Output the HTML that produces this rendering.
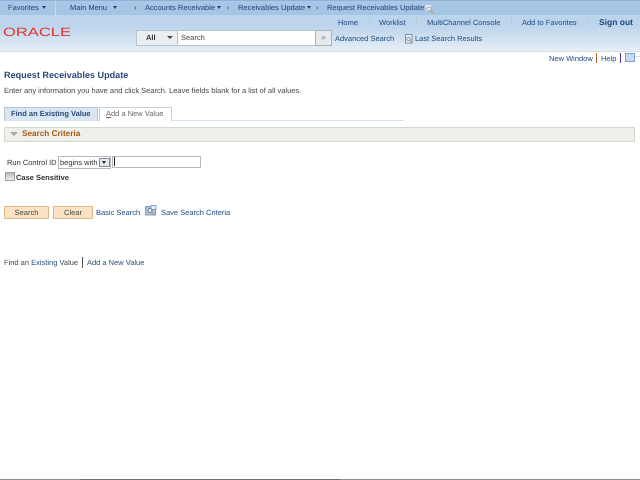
<!DOCTYPE html>
<html><head><meta charset="utf-8">
<style>
html,body{margin:0;padding:0;background:#fff}
#p{position:relative;width:640px;height:480px;overflow:hidden;background:#fff;font-family:"Liberation Sans",sans-serif;font-size:7.5px;color:#333;text-rendering:geometricPrecision;filter:blur(.35px)}
#p div{position:absolute;white-space:nowrap;line-height:11px}
.l{color:#1b4a80}
.n{color:#1f3f70;top:2px}
.t{width:0;height:0;border-left:2px solid transparent;border-right:2px solid transparent;border-top:3px solid #1f3f70;top:6px}
.s{top:17px;width:1px;height:8px;background:#b5cbe0}
.h{top:17px}
</style></head><body><div id="p">
<div style="left:0;top:0;width:640px;height:51px;background:linear-gradient(#bcd4ec 0,#bcd4ec 25px,#c6daee 32px,#dce8f4 45px,#e8eff7 51px)"></div>
<div style="left:0;top:0;width:640px;height:1px;background:#8fb0d0"></div>
<div style="left:0;top:1px;width:640px;height:14px;background:linear-gradient(#a9c7e6,#a4c4e6)"></div>
<div style="left:0;top:51px;width:640px;height:1px;background:#d8dde6"></div>
<div style="left:55px;top:1px;width:1px;height:14px;background:#c8dcf0"></div>
<div class="n" style="left:8px">Favorites</div><div class="t" style="left:42px"></div>
<div class="n" style="left:70px">Main Menu</div><div class="t" style="left:113px"></div>
<div class="n" style="left:134px">›</div>
<div class="n" style="left:145px">Accounts Receivable</div><div class="t" style="left:217px"></div>
<div class="n" style="left:227px">›</div>
<div class="n" style="left:238px">Receivables Update</div><div class="t" style="left:307px"></div>
<div class="n" style="left:316px">›</div>
<div class="n" style="left:327px">Request Receivables Update</div>
<svg style="position:absolute;left:425px;top:4px" width="9" height="10" viewBox="0 0 9 10"><rect x="0.5" y="0.5" width="6" height="7" fill="#e8f0f8" stroke="#b4c4d4"/><circle cx="4" cy="5" r="2" fill="none" stroke="#9ab"/><path d="M5.5 6.5L8 9.5" stroke="#c9a030" stroke-width="1.2"/></svg>
<div class="l h" style="left:338px">Home</div>
<div class="s" style="left:369px"></div>
<div class="l h" style="left:379px">Worklist</div>
<div class="s" style="left:416px"></div>
<div class="l h" style="left:427px">MultiChannel Console</div>
<div class="s" style="left:511px"></div>
<div class="l h" style="left:522px">Add to Favorites</div>
<div class="s" style="left:587px"></div>
<div class="h" style="left:599px;font-size:8.5px;font-weight:bold;color:#1b4a80">Sign out</div>
<svg style="position:absolute;left:3px;top:26px" width="70" height="11" viewBox="0 0 70 11"><text x="0" y="10" font-family="Liberation Sans" font-size="12" fill="#e2322b" textLength="68" lengthAdjust="spacingAndGlyphs">ORACLE</text></svg>
<div style="left:136px;top:30px;width:41px;height:14px;background:#e9eff2;border:1px solid #b8c4cc;border-right:0"></div>
<div style="left:146px;top:32px;font-weight:bold;color:#333">All</div>
<div style="left:167px;top:36px;width:0;height:0;border-left:3px solid transparent;border-right:3px solid transparent;border-top:3px solid #444"></div>
<div style="left:177px;top:30px;width:137px;height:14px;background:#fff;border:1px solid #b8c4cc"></div>
<div style="left:181px;top:32px;color:#444">Search</div>
<div style="left:315px;top:30px;width:15px;height:14px;background:#e4eaee;border:1px solid #a8b4bc;color:#789;font-size:9px;line-height:13px;text-align:center">»</div>
<div class="l" style="left:335px;top:33px">Advanced Search</div>
<svg style="position:absolute;left:405px;top:34px" width="8" height="10" viewBox="0 0 8 10"><rect x="0.5" y="0.5" width="6.5" height="8.5" fill="#eef4fa" stroke="#6f8fb0"/><circle cx="3.5" cy="5" r="1.7" fill="none" stroke="#89a"/><path d="M5 6.5L7 9" stroke="#c9a030"/></svg>
<div class="l" style="left:415px;top:33px">Last Search Results</div>
<div class="l" style="left:549px;top:53px">New Window</div>
<div style="left:596px;top:53px;width:1px;height:10px;background:#b5651d"></div>
<div class="l" style="left:601px;top:53px">Help</div>
<div style="left:620px;top:53px;width:1px;height:10px;background:#4a3a90"></div>
<div style="left:625px;top:53px;width:8px;height:7px;background:#c8daf0;border:1px solid #7f9fd0"></div>
<div style="left:635px;top:56px;width:5px;height:1px;background:#d5dce5"></div>
<div style="left:4px;top:69px;font-size:9.1px;font-weight:bold;color:#2a4a78;line-height:12px">Request Receivables Update</div>
<div style="left:4px;top:85px;color:#444">Enter any information you have and click Search. Leave fields blank for a list of all values.</div>
<div style="left:4px;top:120px;width:400px;height:1px;background:#d5e3f0"></div>
<div style="left:4px;top:107px;width:92px;height:13px;background:#d9e6f3;border:1px solid #b8c6d4;border-bottom:0"></div>
<div style="left:11px;top:108px;font-weight:bold;color:#2a4a78">Find an Existing Value</div>
<div style="left:99px;top:107px;width:71px;height:13px;background:#fff;border:1px solid #c4ced8;border-bottom:0"></div>
<div style="left:106px;top:108px;color:#666"><u>A</u>dd a New Value</div>
<div style="left:4px;top:127px;width:629px;height:13px;background:#eef0ec;border:1px solid #d4d8d2"></div>
<div style="left:10px;top:132px;width:0;height:0;border-left:4px solid transparent;border-right:4px solid transparent;border-top:4px solid #a8a8a8"></div>
<div style="left:22px;top:128px;font-size:8.2px;font-weight:bold;color:#a85a10">Search Criteria</div>
<div style="left:7px;top:157px;color:#333">Run Control ID</div>
<div style="left:58px;top:156px;width:51px;height:11px;background:#fff;border:1px solid #b4b8bc;color:#333;text-indent:1px">begins with</div>
<div style="left:99px;top:158px;width:9px;height:7px;background:#e6e9eb;border:1px solid #889"></div>
<div style="left:102px;top:161px;width:0;height:0;border-left:2px solid transparent;border-right:2px solid transparent;border-top:3px solid #222"></div>
<div style="left:112px;top:156px;width:87px;height:10px;background:#fff;border:1px solid #b4b8bc"></div>
<div style="left:114px;top:157px;width:1px;height:9px;background:#222"></div>
<div style="left:5px;top:172px;width:8px;height:7px;background:linear-gradient(#bbb,#f0f0f0);border:1px solid #a0a0a0"></div>
<div style="left:16px;top:172px;font-weight:bold;color:#333">Case Sensitive</div>
<div style="left:4px;top:206px;width:43px;height:11px;background:#fbe3c4;border:1px solid #e0b888;border-radius:1px;text-align:center;color:#444">Search</div>
<div style="left:53px;top:206px;width:38px;height:11px;background:#fbe3c4;border:1px solid #e0b888;border-radius:1px;text-align:center;color:#444">Clear</div>
<div class="l" style="left:96px;top:207px">Basic Search</div>
<svg style="position:absolute;left:145px;top:205px" width="12" height="11" viewBox="0 0 12 11"><rect x="0.5" y="1.5" width="10" height="8.5" fill="#a8c4e4" stroke="#7f9fc8"/><rect x="6" y="0.5" width="5" height="4" fill="#e8f0f8" stroke="#7f9fc8"/><circle cx="5" cy="5.5" r="2" fill="#fff" stroke="#678"/><path d="M6.5 7L9 9.5" stroke="#c9a030" stroke-width="1.2"/></svg>
<div class="l" style="left:161px;top:207px">Save Search Criteria</div>
<div style="left:4px;top:257px;color:#444">Find an <span style="color:#1b4a80">Existing</span> Value</div>
<div style="left:82px;top:257px;width:1px;height:11px;background:#555"></div>
<div class="l" style="left:87px;top:257px;color:#2a4a78">Add a New Value</div>
<div style="left:0;top:479px;width:640px;height:1px;background:#8a9498"></div>
<div style="left:80px;top:479px;width:260px;height:1px;background:#6a7276"></div>
</div></body></html>
